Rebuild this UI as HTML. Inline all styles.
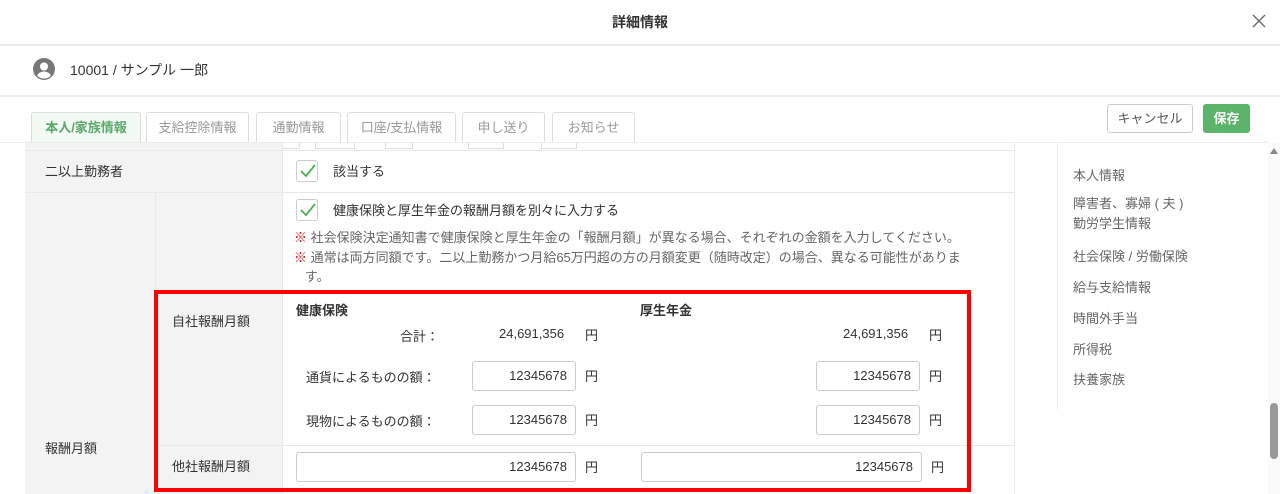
<!DOCTYPE html>
<html><head><meta charset="utf-8"><style>
*{box-sizing:border-box;margin:0;padding:0}
body{width:1280px;height:494px;overflow:hidden;background:#fff;position:relative;font-family:"Liberation Sans","Noto Sans CJK JP",sans-serif;color:#333;font-size:13px}
.a{position:absolute}
.hl{position:absolute;left:0;width:1280px;height:2px;background:#ececec}
.tab{position:absolute;top:112px;height:31px;border:1px solid #ddd;border-bottom:none;border-radius:3px 3px 0 0;color:#999;font-size:13px;line-height:30px;text-align:center;background:#fff}
.g{background:#f3f3f3}
.bl{position:absolute;background:#e8e8e8}
.inp{position:absolute;height:30px;border:1px solid #ccc;border-radius:3px;text-align:right;padding-right:8px;line-height:28px;font-size:13px;color:#333;background:#fff}
.cb{position:absolute;width:22px;height:22px;border:1px solid #ccc;border-radius:3px;background:#fff}
.nav{position:absolute;left:1073px;color:#666;font-size:13px}
</style></head><body>
<div class="a" style="left:0;top:12px;width:1280px;text-align:center;font-size:14px;font-weight:bold;color:#333">詳細情報</div>
<svg class="a" style="left:1252px;top:14px" width="14" height="14" viewBox="0 0 14 14"><path d="M1 1L13 13M13 1L1 13" stroke="#666" stroke-width="1.3"/></svg>
<div class="hl" style="top:44px"></div>
<svg class="a" style="left:32px;top:57px" width="24" height="24" viewBox="0 0 24 24"><circle cx="12" cy="12" r="11" fill="#777"/><circle cx="12" cy="9.5" r="4" fill="#fff"/><path d="M5 18.5c2-3 4.5-4 7-4s5 1 7 4c-2 2-4.3 3-7 3s-5-1-7-3z" fill="#fff"/></svg>
<div class="a" style="left:70px;top:60px;font-size:14px;color:#333">10001 / サンプル 一郎</div>
<div class="hl" style="top:95px"></div>
<div class="tab" style="left:31px;width:110px;color:#5aa86a;background:#f3faf3;font-weight:bold">本人/家族情報</div>
<div class="tab" style="left:146px;width:103px">支給控除情報</div>
<div class="tab" style="left:256px;width:85px">通勤情報</div>
<div class="tab" style="left:347px;width:109px">口座/支払情報</div>
<div class="tab" style="left:462px;width:83px">申し送り</div>
<div class="tab" style="left:552px;width:83px">お知らせ</div>
<div class="a" style="left:1107px;top:104px;width:86px;height:29px;border:1px solid #ccc;border-radius:3px;text-align:center;line-height:27px;color:#555">キャンセル</div>
<div class="a" style="left:1203px;top:104px;width:47px;height:29px;background:#5cb36a;border-radius:3px;text-align:center;line-height:29px;color:#fff;font-weight:bold">保存</div>
<div class="hl" style="top:142px;height:1px;width:1268px"></div>
<div class="a" style="left:240px;top:143px;width:60px;height:6px;border:1px solid #ddd;border-top:none;border-radius:0 0 3px 3px"></div>
<div class="a" style="left:315px;top:143px;width:40px;height:6px;border:1px solid #ddd;border-top:none"></div>
<div class="a" style="left:385px;top:143px;width:28px;height:6px;border:1px solid #ddd;border-top:none"></div>
<div class="a" style="left:468px;top:143px;width:36px;height:6px;border:1px solid #ddd;border-top:none"></div>
<div class="a" style="left:541px;top:143px;width:36px;height:6px;border:1px solid #ddd;border-top:none"></div>
<div class="a g" style="left:25px;top:143px;width:257px;height:351px"></div>
<div class="bl" style="left:25px;top:150px;width:990px;height:1px"></div>
<div class="bl" style="left:25px;top:192px;width:990px;height:1px"></div>
<div class="bl" style="left:155px;top:192px;width:1px;height:302px"></div>
<div class="bl" style="left:282px;top:143px;width:1px;height:351px"></div>
<div class="bl" style="left:1014px;top:143px;width:1px;height:351px"></div>
<div class="bl" style="left:155px;top:445px;width:860px;height:1px"></div>
<div class="a" style="left:45px;top:161px">二以上勤務者</div>
<div class="cb" style="left:296px;top:160px"></div>
<svg class="a" style="left:300px;top:164px" width="16" height="14"><path d="M1 7l5 5L15 1" stroke="#4caf50" stroke-width="1.8" fill="none"/></svg>
<div class="a" style="left:333px;top:161px">該当する</div>
<div class="cb" style="left:296px;top:199px"></div>
<svg class="a" style="left:300px;top:203px" width="16" height="14"><path d="M1 7l5 5L15 1" stroke="#4caf50" stroke-width="1.8" fill="none"/></svg>
<div class="a" style="left:333px;top:200px">健康保険と厚生年金の報酬月額を別々に入力する</div>
<div class="a" style="left:294px;top:228px;font-size:13px;color:#666;width:720px;line-height:19.5px;white-space:nowrap"><span style="color:#e00">※</span> 社会保険決定通知書で健康保険と厚生年金の「報酬月額」が異なる場合、それぞれの金額を入力してください。<br><span style="color:#e00">※</span> 通常は両方同額です。二以上勤務かつ月給65万円超の方の月額変更（随時改定）の場合、異なる可能性がありま<br>&nbsp;&nbsp;&nbsp;す。</div>
<div class="a" style="left:45px;top:438px">報酬月額</div>
<div class="a" style="left:172px;top:311px">自社報酬月額</div>
<div class="a" style="left:172px;top:456px">他社報酬月額</div>
<div class="a" style="left:296px;top:300px;font-weight:bold">健康保険</div>
<div class="a" style="left:640px;top:300px;font-weight:bold">厚生年金</div>
<div class="a" style="left:400px;top:326px">合計：</div>
<div class="a" style="left:499px;top:326px">24,691,356</div>
<div class="a" style="left:585px;top:325px">円</div>
<div class="a" style="left:843px;top:326px">24,691,356</div>
<div class="a" style="left:929px;top:325px">円</div>
<div class="a" style="left:306px;top:367px">通貨によるものの額：</div>
<div class="inp" style="left:472px;top:361px;width:104px">12345678</div>
<div class="a" style="left:585px;top:366px">円</div>
<div class="inp" style="left:816px;top:361px;width:104px">12345678</div>
<div class="a" style="left:929px;top:366px">円</div>
<div class="a" style="left:306px;top:411px">現物によるものの額：</div>
<div class="inp" style="left:472px;top:405px;width:104px">12345678</div>
<div class="a" style="left:585px;top:410px">円</div>
<div class="inp" style="left:816px;top:405px;width:104px">12345678</div>
<div class="a" style="left:929px;top:410px">円</div>
<div class="inp" style="left:296px;top:452px;width:280px">12345678</div>
<div class="a" style="left:585px;top:457px">円</div>
<div class="inp" style="left:641px;top:452px;width:281px">12345678</div>
<div class="a" style="left:931px;top:457px">円</div>
<div class="a" style="left:154px;top:290px;width:817px;height:202px;border:4px solid #f00"></div>
<div class="bl" style="left:1057px;top:143px;width:1px;height:266px"></div>
<div class="nav" style="top:165px">本人情報</div>
<div class="nav" style="top:194px;line-height:20px">障害者、寡婦 ( 夫 )<br>勤労学生情報</div>
<div class="nav" style="top:246px">社会保険 / 労働保険</div>
<div class="nav" style="top:277px">給与支給情報</div>
<div class="nav" style="top:308px">時間外手当</div>
<div class="nav" style="top:339px">所得税</div>
<div class="nav" style="top:369px">扶養家族</div>
<div class="a" style="left:1268px;top:143px;width:12px;height:351px;background:#fafafa"></div>
<svg class="a" style="left:1270px;top:148px" width="8" height="6"><path d="M0 6L4 0L8 6z" fill="#888"/></svg>
<div class="a" style="left:1270px;top:403px;width:8px;height:56px;background:#999;border-radius:4px"></div>
</body></html>
